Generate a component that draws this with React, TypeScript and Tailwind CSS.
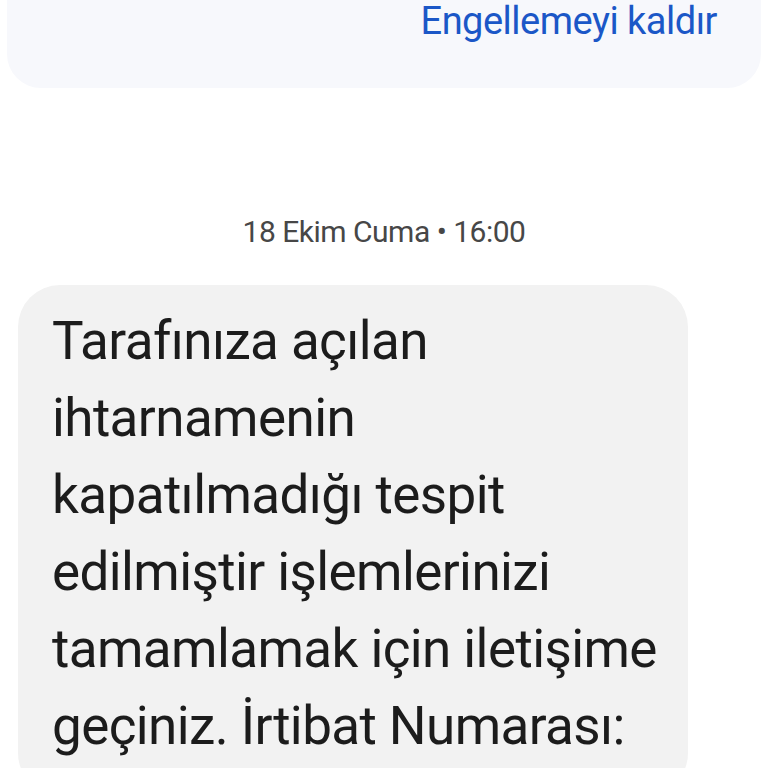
export default function App() {
  const lines = [
    "Tarafınıza açılan",
    "ihtarnamenin",
    "kapatılmadığı tespit",
    "edilmiştir işlemlerinizi",
    "tamamlamak için iletişime",
    "geçiniz. İrtibat Numarası:",
  ];

  return (
    <div className="w-[768px] h-[768px] overflow-hidden bg-white font-['Roboto',sans-serif]">
      <div className="mx-[7px] h-[88px] rounded-b-[34px] bg-[#f7f8fc] flex justify-end pr-[44px]">
        <span className="text-[38px] leading-[42px] text-[#1b57c7] tracking-[-0.5px]">
          Engellemeyi kaldır
        </span>
      </div>

      <div className="mt-[126px] text-center text-[30px] leading-[36px] text-[#474747] tracking-[-0.5px]">
        18 Ekim Cuma • 16:00
      </div>

      <div className="ml-[18px] mt-[35px] w-[670px] rounded-[42px] bg-[#f2f2f2] pl-[34px] pt-[18px] pb-[30px]">
        {lines.map((line) => (
          <div
            key={line}
            className="text-[53px] leading-[77px] text-[#1c1c1c] tracking-[-0.6px] whitespace-nowrap"
          >
            {line}
          </div>
        ))}
      </div>
    </div>
  );
}
